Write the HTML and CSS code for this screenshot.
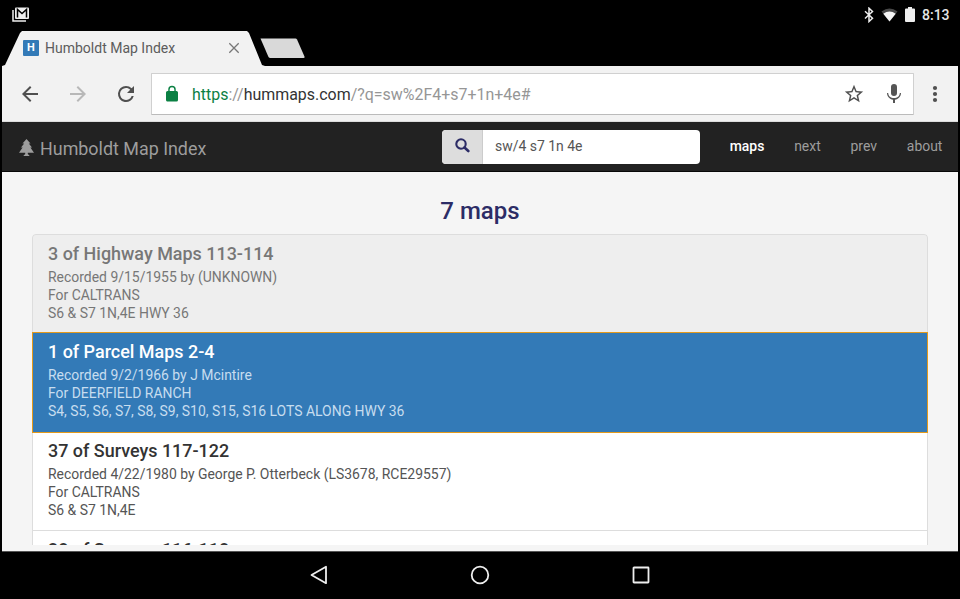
FILE: index.html
```html
<!DOCTYPE html>
<html lang="en">
<head>
<meta charset="utf-8">
<title>Humboldt Map Index</title>
<link rel="stylesheet" href="styles.css">
</head>
<body>
<div class="device">
  <div class="status-bar">
    <svg class="mail" width="18" height="15" viewBox="0 0 18 15"><path d="M1 3v11h13" fill="none" stroke="#eee" stroke-width="1.5"/><path d="M4 .5h12q1 0 1 1v9.500q0 1-1 1h-12q-1 0-1-1v-9.500q0-1 1-1z" fill="#eee"/><path d="M5.500 10.500V2.500l4.500 4 4.500-4v8" fill="none" stroke="#000" stroke-width="1.500"/></svg>
    <div class="status-right">
      <svg class="bt" width="12" height="16" viewBox="0 0 12 16"><path d="M2 4.200l7.500 7-3.500 3.300V1.200l3.500 3.300-7.500 7" fill="none" stroke="#eee" stroke-width="1.500"/></svg>
      <svg class="wifi" width="17" height="14" viewBox="0 0 17 14"><path d="M.5 3.500Q8.500-2.500 16.500 3.500L8.500 13.500z" fill="#484848"/><path d="M2.300 5.700Q8.500 1.500 14.700 5.700L8.500 13.500z" fill="#f4f4f4"/></svg>
      <svg class="battery" width="10" height="15" viewBox="0 0 10 15"><path d="M3 0h4v1.500h2q1 0 1 1v11.500q0 1-1 1h-8q-1 0-1-1v-11.500q0-1 1-1h2z" fill="#eee"/></svg>
      <span class="clock">8:13</span>
    </div>
  </div>
  <div class="tab-strip">
    <div class="tab">
      <span class="favicon">H</span>
      <span class="tab-title">Humboldt Map Index</span>
      <svg width="12" height="12" viewBox="0 0 12 12"><path d="M1.300 1.300l9.400 9.400M10.700 1.300l-9.400 9.400" stroke="#777" stroke-width="1.300"/></svg>
    </div>
    <svg class="new-tab" width="46" height="21" viewBox="0 0 46 21"><path d="M1.500.5h35q1 0 1.500 1l7.500 17q.5 1.500-1 1.500h-33q-1.500 0-2-1z" fill="#d9d9d9"/></svg>
  </div>
  <div class="window">
    <div class="toolbar">
      <svg class="tool back" width="24" height="24" viewBox="0 0 24 24"><path d="M20 11H7.830l5.590-5.590L12 4l-8 8 8 8 1.410-1.410L7.830 13H20z" fill="#505050"/></svg>
      <svg class="tool fwd" width="24" height="24" viewBox="0 0 24 24"><path d="M12 4l-1.410 1.410L16.170 11H4v2h12.170l-5.580 5.590L12 20l8-8z" fill="#b8b8b8"/></svg>
      <svg class="reload" width="24" height="24" viewBox="0 0 24 24"><path d="M17.650 6.350A7.960 7.960 0 0 0 12 4a8 8 0 1 0 7.730 10h-2.080A6 6 0 1 1 12 6c1.660 0 3.140.690 4.220 1.780L13 11h7V4z" fill="#505050"/></svg>
      <div class="omnibox">
        <svg width="18" height="18" viewBox="0 0 24 24"><path d="M18 8h-1V6A5 5 0 0 0 7 6v2H6a2 2 0 0 0-2 2v10c0 1.100.9 2 2 2h12a2 2 0 0 0 2-2V10a2 2 0 0 0-2-2zM8.900 8V6a3.100 3.100 0 0 1 6.200 0v2z" fill="#0b8043"/></svg>
        <span class="url"><span class="scheme">https</span>://<span class="host">hummaps.com</span>/?q=sw%2F4+s7+1n+4e#</span>
        <svg class="star" width="22" height="22" viewBox="0 0 24 24"><path d="M22 9.240l-7.190-.620L12 2 9.190 8.630 2 9.240l5.460 4.730L5.820 21 12 17.270 18.180 21l-1.630-7.030zM12 15.400l-3.760 2.270 1-4.280-3.320-2.880 4.380-.380L12 6.100l1.710 4.040 4.380.380-3.320 2.880 1 4.280z" fill="#505050"/></svg>
        <svg class="mic" width="24" height="24" viewBox="0 0 24 24"><path d="M12 14a3 3 0 0 0 3-3V5a3 3 0 0 0-6 0v6a3 3 0 0 0 3 3zM17.800 11c0 3-2.540 5.100-5.800 5.100S6.200 14 6.200 11H5c0 3.410 2.720 6.230 6 6.720V21h2v-3.280c3.280-.480 6-3.300 6-6.720z" fill="#555"/></svg>
      </div>
      <svg class="more" width="6" height="18" viewBox="0 0 6 18"><g fill="#505050"><circle cx="3" cy="3" r="2.100"/><circle cx="3" cy="9" r="2.100"/><circle cx="3" cy="15" r="2.100"/></g></svg>
    </div>
    <nav class="navbar">
      <a class="brand"><svg width="15" height="18" viewBox="0 0 15 18"><path d="M7.500 0l4 4.600h-1.700l3.200 4h-1.600l3.600 5.100H8.800v1.300l1.600 1.500v.5H4.600v-.5l1.600-1.500v-1.300H0l3.600-5.100H2l3.200-4H3.500z" fill="#9d9d9d"/></svg><span>Humboldt Map Index</span></a>
      <div class="search">
        <span class="search-btn"><svg width="15" height="15" viewBox="0 0 15 15"><circle cx="6" cy="6" r="4.700" fill="none" stroke="#2c2c66" stroke-width="2.100"/><path d="M9.500 9.500l3.800 3.500" stroke="#2c2c66" stroke-width="2.600" stroke-linecap="round"/></svg></span>
        <span class="search-text">sw/4 s7 1n 4e</span>
      </div>
      <div class="links"><a class="active">maps</a><a>next</a><a>prev</a><a>about</a></div>
    </nav>
    <main class="content">
      <h1>7 maps</h1>
      <div class="list">
        <div class="item viewed"><h2>3 of Highway Maps 113-114</h2><p>Recorded 9/15/1955 by (UNKNOWN)</p><p>For CALTRANS</p><p>S6 &amp; S7 1N,4E HWY 36</p></div>
        <div class="item selected"><h2>1 of Parcel Maps 2-4</h2><p>Recorded 9/2/1966 by J Mcintire</p><p>For DEERFIELD RANCH</p><p>S4, S5, S6, S7, S8, S9, S10, S15, S16 LOTS ALONG HWY 36</p></div>
        <div class="item"><h2>37 of Surveys 117-122</h2><p>Recorded 4/22/1980 by George P. Otterbeck (LS3678, RCE29557)</p><p>For CALTRANS</p><p>S6 &amp; S7 1N,4E</p></div>
        <div class="item"><h2>38 of Surveys 116-118</h2></div>
      </div>
    </main>
  </div>
  <div class="system-nav">
    <svg width="20" height="20" viewBox="0 0 20 20"><path d="M17 1.800v16.400L2.500 10z" fill="none" stroke="#eee" stroke-width="1.800" stroke-linejoin="round"/></svg>
    <svg width="20" height="20" viewBox="0 0 20 20"><circle cx="10" cy="10" r="8.300" fill="none" stroke="#eee" stroke-width="1.800"/></svg>
    <svg width="20" height="20" viewBox="0 0 20 20"><rect x="2.500" y="2.500" width="15" height="15" rx=".5" fill="none" stroke="#eee" stroke-width="1.800"/></svg>
  </div>
</div>
</body>
</html>
```
FILE: styles.css
```css
* { box-sizing: border-box; }
body { margin: 0; background: #000; font-family: Roboto, "Liberation Sans", sans-serif; }
svg { display: block; flex: none; }
h1, h2, p { margin: 0; font-weight: 400; white-space: nowrap; }
.device { width: 960px; height: 599px; display: flex; flex-direction: column; overflow: hidden; background: #000; }

.status-bar { height: 31px; display: flex; justify-content: space-between; padding: 7px 10px 0 12px; }
.status-right { display: flex; align-items: flex-start; }
.wifi { margin: 1px 0 0 6px; }
.battery { margin: 0 0 0 7px; }
.clock { width: 28px; margin-left: 7px; font-size: 14px; line-height: 17px; font-weight: 500; color: #e6e6e6; white-space: nowrap; }

.tab-strip { height: 35px; display: flex; padding-left: 2px; }
.tab { width: 263px; height: 35px; display: flex; align-items: center; padding: 0 25px 2px 21px; background: #f2f2f2; clip-path: polygon(0 100%, 3px 97%, 18px 2px, 20px 0, 245px 0, 247px 2px, 260px 97%, 263px 100%); }
.favicon { width: 16px; height: 16px; border-radius: 1px; background: #337ab7; color: #fff; font-size: 11px; line-height: 16px; font-weight: 700; text-align: center; }
.tab-title { flex: 1; margin-left: 6px; font-size: 14px; color: #5c5c5c; }
.new-tab { margin: 7px 0 0 -6px; }

.window { width: 955.5px; height: 486px; margin-left: 2px; display: flex; flex-direction: column; overflow: hidden; background: #f5f5f5; border-bottom: 1px solid #555; }
.toolbar { height: 56px; flex: none; display: flex; align-items: center; padding: 0 19.5px 0 16px; background: #f2f2f2; border-bottom: 1px solid #ddd; }
.tool { margin-right: 24px; }
.reload { margin-right: 13px; }
.omnibox { flex: 1; height: 42px; margin-right: 18px; padding: 0 7px 0 11px; display: flex; align-items: center; background: #fff; border: 1px solid #d0d0d0; border-bottom-color: #bbb; border-radius: 1px; }
.url { flex: 1; margin-left: 11px; padding-top: 1px; font-size: 15.95px; color: #969696; }
.scheme { color: #0b8043; }
.host { color: #333; }
.star { margin-right: 17px; }

.navbar { height: 50px; flex: none; display: flex; background: #222; border-bottom: 1px solid #080808; }
.brand { width: 440px; display: flex; align-items: center; padding: 3px 0 0 17px; color: #9d9d9d; font-size: 17.9px; }
.brand span { margin-left: 6px; }
.search { width: 258px; height: 34px; margin-top: 8px; display: flex; border-radius: 4px; overflow: hidden; background: #fff; }
.search-btn { width: 41px; display: flex; align-items: center; justify-content: center; padding-bottom: 4px; background: #ddd; border-right: 1px solid #ccc; }
.search-text { padding-left: 12px; font-size: 13.95px; line-height: 33px; color: #555; }
.links { display: flex; gap: 29.8px; padding-left: 29.7px; font-size: 13.95px; line-height: 48px; color: #9d9d9d; }
.active { color: #fff; font-weight: 500; }

.content { height: 373px; flex: none; padding: 22px 29.5px 0 30px; overflow: hidden; }
.content h1 { height: 40px; font-size: 24px; line-height: 35px; font-weight: 500; color: #2c2c66; text-align: center; }
.list { border-radius: 4px 4px 0 0; overflow: hidden; }
.item { height: 99px; padding: 9px 15px 0; background: #fff; border: 1px solid #ddd; border-bottom: 0; color: #555; font-size: 13.95px; line-height: 18px; }
.item h2 { height: 24px; font-size: 17.95px; line-height: 19px; font-weight: 500; color: #333; }
.viewed { height: 98px; background: #eee; color: #777; border-radius: 4px 4px 0 0; }
.viewed h2 { color: #777; }
.selected { height: 101px; margin-bottom: -2px; position: relative; z-index: 1; background: #337ab7; border: 1px solid #e39a1c; color: #c7ddef; }
.selected h2 { color: #fff; }

.system-nav { height: 47px; padding-bottom: 1px; display: flex; justify-content: center; align-items: center; gap: 141px; }
```
